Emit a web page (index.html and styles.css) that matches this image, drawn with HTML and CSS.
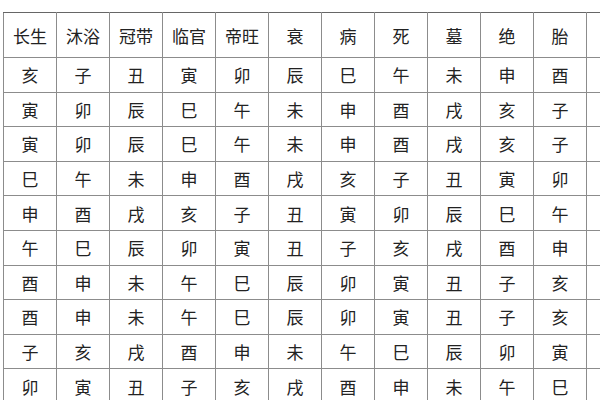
FILE: index.html
```html
<!DOCTYPE html>
<html lang="zh">
<head>
<meta charset="utf-8">
<link rel="stylesheet" href="styles.css">
</head>
<body>
<table class="grid">
<thead>
<tr><th>长生</th><th>沐浴</th><th>冠带</th><th>临官</th><th>帝旺</th><th>衰</th><th>病</th><th>死</th><th>墓</th><th>绝</th><th>胎</th><th></th></tr>
</thead>
<tbody>
<tr><td>亥</td><td>子</td><td>丑</td><td>寅</td><td>卯</td><td>辰</td><td>巳</td><td>午</td><td>未</td><td>申</td><td>酉</td><td></td></tr>
<tr><td>寅</td><td>卯</td><td>辰</td><td>巳</td><td>午</td><td>未</td><td>申</td><td>酉</td><td>戌</td><td>亥</td><td>子</td><td></td></tr>
<tr><td>寅</td><td>卯</td><td>辰</td><td>巳</td><td>午</td><td>未</td><td>申</td><td>酉</td><td>戌</td><td>亥</td><td>子</td><td></td></tr>
<tr><td>巳</td><td>午</td><td>未</td><td>申</td><td>酉</td><td>戌</td><td>亥</td><td>子</td><td>丑</td><td>寅</td><td>卯</td><td></td></tr>
<tr><td>申</td><td>酉</td><td>戌</td><td>亥</td><td>子</td><td>丑</td><td>寅</td><td>卯</td><td>辰</td><td>巳</td><td>午</td><td></td></tr>
<tr><td>午</td><td>巳</td><td>辰</td><td>卯</td><td>寅</td><td>丑</td><td>子</td><td>亥</td><td>戌</td><td>酉</td><td>申</td><td></td></tr>
<tr><td>酉</td><td>申</td><td>未</td><td>午</td><td>巳</td><td>辰</td><td>卯</td><td>寅</td><td>丑</td><td>子</td><td>亥</td><td></td></tr>
<tr><td>酉</td><td>申</td><td>未</td><td>午</td><td>巳</td><td>辰</td><td>卯</td><td>寅</td><td>丑</td><td>子</td><td>亥</td><td></td></tr>
<tr><td>子</td><td>亥</td><td>戌</td><td>酉</td><td>申</td><td>未</td><td>午</td><td>巳</td><td>辰</td><td>卯</td><td>寅</td><td></td></tr>
<tr><td>卯</td><td>寅</td><td>丑</td><td>子</td><td>亥</td><td>戌</td><td>酉</td><td>申</td><td>未</td><td>午</td><td>巳</td><td></td></tr>
</tbody>
</table>
</body>
</html>
```
FILE: styles.css
```css
html, body {
  margin: 0;
  padding: 0;
  overflow: hidden;
  background: #ffffff;
}
body {
  width: 600px;
  height: 400px;
  font-family: "Noto Sans CJK SC", "Noto Sans", sans-serif;
  color: #222222;
}
.grid {
  border-collapse: collapse;
  table-layout: fixed;
  width: 636px;
  margin: 12px 0 0 3px;
}
.grid th,
.grid td {
  border: 1px solid #8c8c8c;
  width: 52px;
  padding: 0;
  text-align: center;
  vertical-align: middle;
  font-size: 17px;
  font-weight: 400;
  line-height: 1;
}
.grid thead tr {
  height: 45px;
}
.grid tbody tr {
  height: 34.6px;
}
.grid thead th {
  border-top-color: #666666;
}
```
